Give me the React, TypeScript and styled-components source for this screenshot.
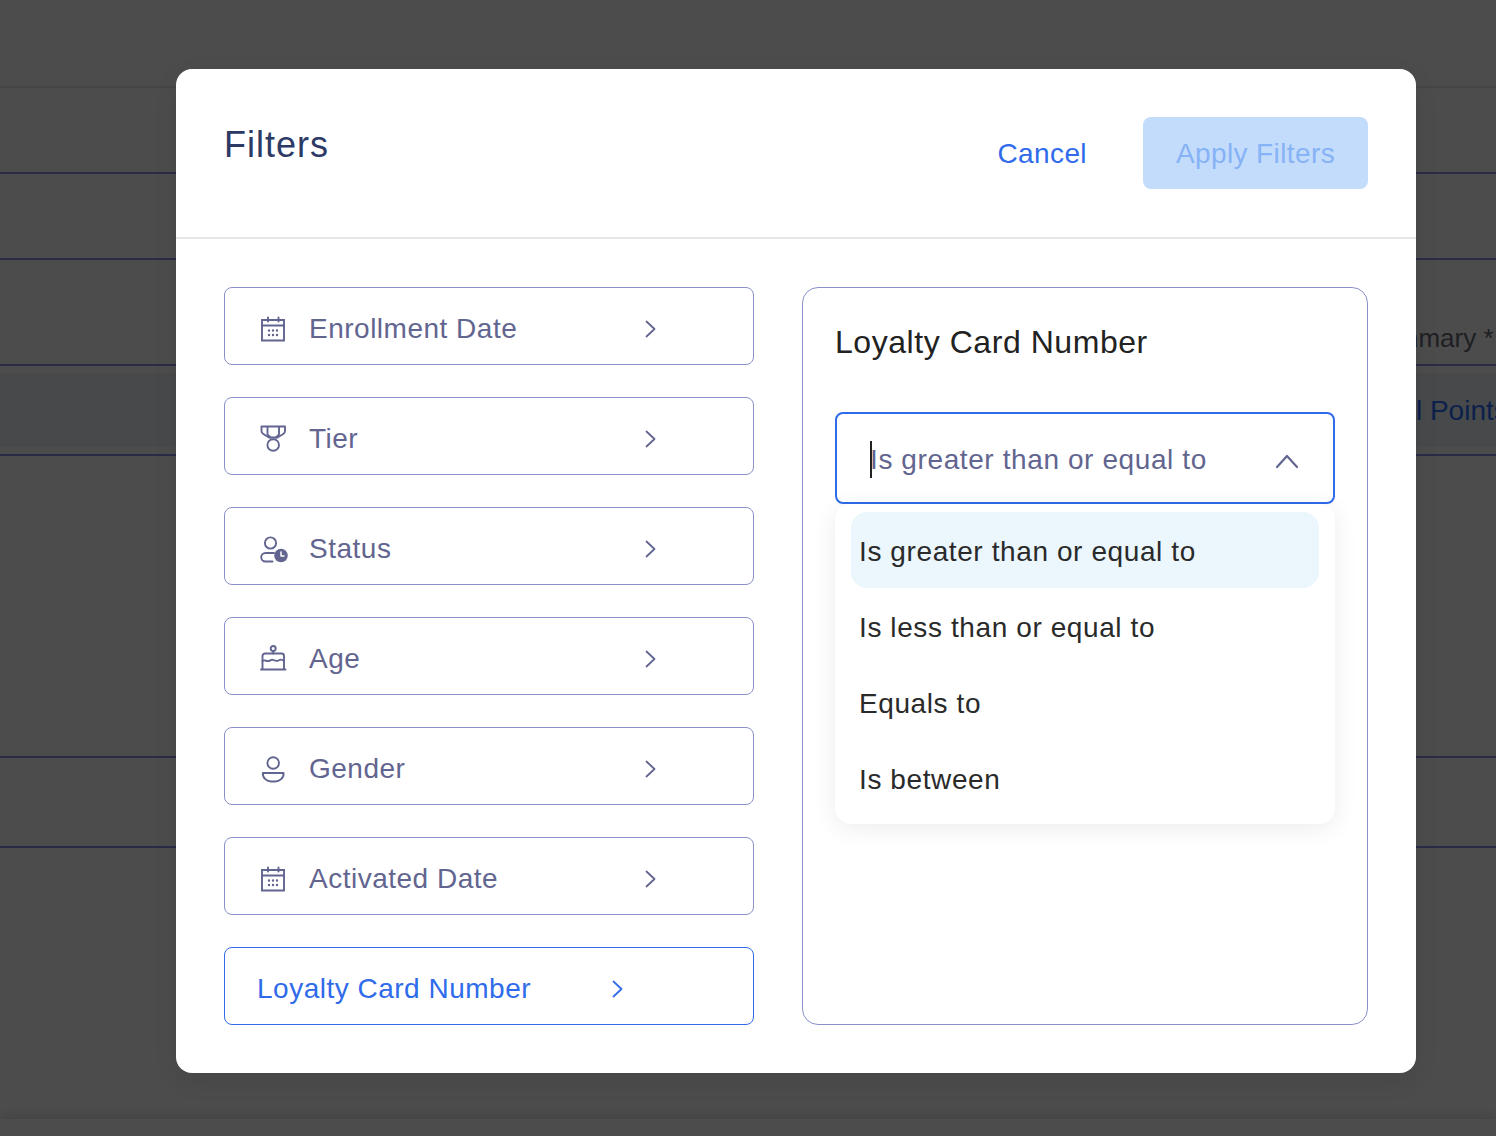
import { ReactNode } from "react";
import styled, { createGlobalStyle } from "styled-components";

const GlobalStyle = createGlobalStyle`
	* {
		box-sizing: border-box;
	}
	html, body {
		margin: 0;
		padding: 0;
		background: #fff;
		font-family: "Liberation Sans", Arial, sans-serif;
	}
`;

const Page = styled.div`
	position: relative;
	width: 1496px;
	height: 1136px;
	overflow: hidden;
	background: #fff;
`;
const TopBar = styled.div`
	height: 88px;
	border-bottom: 2px solid #e6e6e6;
`;
const TableRow = styled.div<{ $height: number }>`
	display: flex;
	height: ${(props) => props.$height}px;
	border-bottom: 2px solid #8c8fe6;
	overflow: hidden;
	white-space: nowrap;
`;
const SummaryLabel = styled.div`
	margin: 63px 0 0 1365px;
	font-size: 26px;
	color: #666a76;
`;
const PointsBand = styled.div`
	width: 100%;
	height: 74px;
	margin-top: 7px;
	padding: 22px 0 0 1363px;
	font-size: 28px;
	color: #2a6bff;
	background: #f1f6fa;
`;
const BottomBar = styled.div`
	position: absolute;
	left: 0;
	right: 0;
	bottom: 0;
	height: 17px;
	background: #fff;
	box-shadow: 0 -4px 10px rgba(0, 0, 0, 0.12);
`;

const Overlay = styled.div`
	position: absolute;
	inset: 0;
	display: flex;
	align-items: flex-start;
	padding: 69px 80px 0 176px;
	background: rgba(0, 0, 0, 0.7);
`;
const Modal = styled.div`
	width: 1240px;
	height: 1004px;
	background: #fff;
	border-radius: 16px;
	box-shadow: 0 8px 24px rgba(0, 0, 0, 0.08);
`;
const ModalHeader = styled.header`
	display: flex;
	align-items: flex-start;
	justify-content: space-between;
	height: 170px;
	padding: 48px;
	border-bottom: 2px solid #e6e6e6;
`;
const Title = styled.h1`
	margin: 4px 0 0;
	font-size: 36px;
	font-weight: 400;
	line-height: 48px;
	letter-spacing: 1px;
	color: #2d3a66;
`;
const Actions = styled.div`
	display: flex;
	align-items: center;
	gap: 56px;
`;
const CancelButton = styled.button`
	padding: 2px 0 0;
	border: none;
	background: none;
	font: inherit;
	font-size: 28px;
	letter-spacing: 0.4px;
	color: #2f6bea;
`;
const ApplyButton = styled.button`
	width: 225px;
	height: 72px;
	padding: 2px 0 0;
	border: none;
	border-radius: 8px;
	background: #c4dcfb;
	font: inherit;
	font-size: 28px;
	letter-spacing: 0.4px;
	color: #86b2f6;
`;
const Body = styled.div`
	display: grid;
	grid-template-columns: 530px 566px;
	gap: 48px;
	padding: 48px;
`;
const FilterList = styled.div`
	display: flex;
	flex-direction: column;
	gap: 32px;
`;
const FilterRow = styled.div<{ $active?: boolean }>`
	display: flex;
	align-items: center;
	justify-content: space-between;
	height: 78px;
	padding: 6px ${(props) => (props.$active ? 129 : 96)}px 0
		${(props) => (props.$active ? 32 : 35)}px;
	border: 1.5px solid ${(props) => (props.$active ? "#2f6bea" : "#8a90cc")};
	border-radius: 8px;
	color: ${(props) => (props.$active ? "#2f6bea" : "#62658f")};
`;
const FilterLabel = styled.div`
	display: flex;
	align-items: center;
	gap: 21px;
	font-size: 28px;
	letter-spacing: 0.5px;
	white-space: nowrap;
`;
const Panel = styled.section`
	height: 738px;
	padding: 32px;
	border: 1.5px solid #8a90cc;
	border-radius: 16px;
`;
const PanelTitle = styled.h2`
	margin: 0;
	font-size: 32px;
	font-weight: 400;
	line-height: 44px;
	letter-spacing: 0.55px;
	color: #222;
`;
const SelectWrap = styled.div`
	position: relative;
	margin-top: 48px;
`;
const SelectBox = styled.div`
	display: flex;
	align-items: center;
	justify-content: space-between;
	height: 92px;
	padding: 2px 34px 0 33px;
	border: 2px solid #2f6bea;
	border-radius: 8px;
	font-size: 28px;
	letter-spacing: 0.6px;
	color: #62658f;
`;
const SelectValue = styled.span`
	display: inline-block;
	border-left: 2px solid #222;
	line-height: 37px;
	text-indent: -2px;
	white-space: nowrap;
`;
const CaretSlot = styled.span`
	display: flex;
	padding-top: 3px;
`;
const Menu = styled.ul`
	position: absolute;
	top: 92px;
	left: 0;
	right: 0;
	margin: 0;
	padding: 8px 16px;
	list-style: none;
	background: #fff;
	border-radius: 16px;
	box-shadow: 0 4px 24px rgba(0, 0, 0, 0.08);
`;
const MenuItem = styled.li<{ $selected?: boolean }>`
	display: flex;
	align-items: center;
	height: 76px;
	padding: 4px 0 0 8px;
	border-radius: 16px;
	font-size: 28px;
	letter-spacing: 0.6px;
	color: #2a2a2a;
	background: ${(props) => (props.$selected ? "#ebf6fd" : "transparent")};
`;

function IconSvg({ children }: { children: ReactNode }) {
	return (
		<svg
			width="28"
			height="28"
			viewBox="0 0 28 28"
			fill="none"
			stroke="currentColor"
			strokeWidth="1.9"
			strokeLinecap="round"
			strokeLinejoin="round"
		>
			{children}
		</svg>
	);
}

const CalendarIcon = () => (
	<IconSvg>
		<path d="M2 5h22v20.500H2z" strokeLinejoin="miter" />
		<path d="M2 10.500h22M8 2.500v4M18.500 2.500v4" />
		<path
			d="M9 15.500h.01M13 15.500h.01M17 15.500h.01M9 20h.01M13 20h.01M17 20h.01"
			strokeWidth="2.400"
		/>
	</IconSvg>
);
const MedalIcon = () => (
	<IconSvg>
		<path d="M1.500 1.500h23.500v4.500c0 1.400-.7 2.300-1.800 3l-5.700 3.500h-8.500L3.300 9C2.200 8.300 1.500 7.400 1.500 6z" />
		<path d="M7.500 2v7.500l3 3M19 2v7.500l-3 3" />
		<circle cx="13.200" cy="20" r="5.800" />
	</IconSvg>
);
const StatusIcon = () => (
	<IconSvg>
		<circle cx="10.500" cy="8" r="5.600" />
		<path d="M14 18H5.500a4 4 0 0 0 0 8.500h7" />
		<circle cx="21" cy="20.500" r="6.800" fill="currentColor" stroke="none" />
		<path d="M21 17v4h3" stroke="#fff" strokeWidth="1.500" />
	</IconSvg>
);
const CakeIcon = () => (
	<IconSvg>
		<circle cx="13.200" cy="3.500" r="2.500" />
		<path d="M13.200 6v2.500" />
		<path d="M2.500 24V11a2.500 2.500 0 0 1 2.500-2.500h16.500a2.500 2.500 0 0 1 2.500 2.500v13" />
		<path d="M2.500 16c2.500-2 4 1 6.500 0s2.500-2 4.500-1 3 1.500 5 .5 3-1.500 5.500.5" />
		<path d="M1 24.500h24.500" />
	</IconSvg>
);
const PersonIcon = () => (
	<IconSvg>
		<circle cx="13.200" cy="8" r="5.800" />
		<path d="M2.800 18h20.800c.3 5-4 8.500-8.500 8.500h-3.800c-4.500 0-8.800-3.500-8.500-8.500z" />
	</IconSvg>
);

const ChevronRight = () => (
	<svg width="12" height="18" viewBox="0 0 12 18" fill="none">
		<path
			d="M1.500 1.500 9.500 9l-8 7.500"
			stroke="currentColor"
			strokeWidth="1.800"
			strokeLinecap="round"
			strokeLinejoin="round"
		/>
	</svg>
);
const ChevronUp = () => (
	<svg width="24" height="16" viewBox="0 0 24 16" fill="none">
		<path
			d="M2 14 12 3l10 11"
			stroke="#62658f"
			strokeWidth="2.200"
			strokeLinecap="round"
			strokeLinejoin="round"
		/>
	</svg>
);

const filters = [
	{ name: "Enrollment Date", icon: <CalendarIcon /> },
	{ name: "Tier", icon: <MedalIcon /> },
	{ name: "Status", icon: <StatusIcon /> },
	{ name: "Age", icon: <CakeIcon /> },
	{ name: "Gender", icon: <PersonIcon /> },
	{ name: "Activated Date", icon: <CalendarIcon /> },
];

const options = [
	"Is greater than or equal to",
	"Is less than or equal to",
	"Equals to",
	"Is between",
];

function App() {
	return (
		<Page>
			<GlobalStyle />
			<TopBar />
			<TableRow $height={86} />
			<TableRow $height={86} />
			<TableRow $height={106}>
				<SummaryLabel>Summary *</SummaryLabel>
			</TableRow>
			<TableRow $height={90}>
				<PointsBand>Total Points</PointsBand>
			</TableRow>
			<TableRow $height={302} />
			<TableRow $height={90} />
			<BottomBar />
			<Overlay>
				<Modal>
					<ModalHeader>
						<Title>Filters</Title>
						<Actions>
							<CancelButton>Cancel</CancelButton>
							<ApplyButton>Apply Filters</ApplyButton>
						</Actions>
					</ModalHeader>
					<Body>
						<FilterList>
							{filters.map((filter) => (
								<FilterRow key={filter.name}>
									<FilterLabel>
										{filter.icon}
										{filter.name}
									</FilterLabel>
									<ChevronRight />
								</FilterRow>
							))}
							<FilterRow $active>
								<FilterLabel>Loyalty Card Number</FilterLabel>
								<ChevronRight />
							</FilterRow>
						</FilterList>
						<Panel>
							<PanelTitle>Loyalty Card Number</PanelTitle>
							<SelectWrap>
								<SelectBox>
									<SelectValue>{options[0]}</SelectValue>
									<CaretSlot>
										<ChevronUp />
									</CaretSlot>
								</SelectBox>
								<Menu>
									{options.map((option, index) => (
										<MenuItem key={option} $selected={index === 0}>
											{option}
										</MenuItem>
									))}
								</Menu>
							</SelectWrap>
						</Panel>
					</Body>
				</Modal>
			</Overlay>
		</Page>
	);
}

export default App;
